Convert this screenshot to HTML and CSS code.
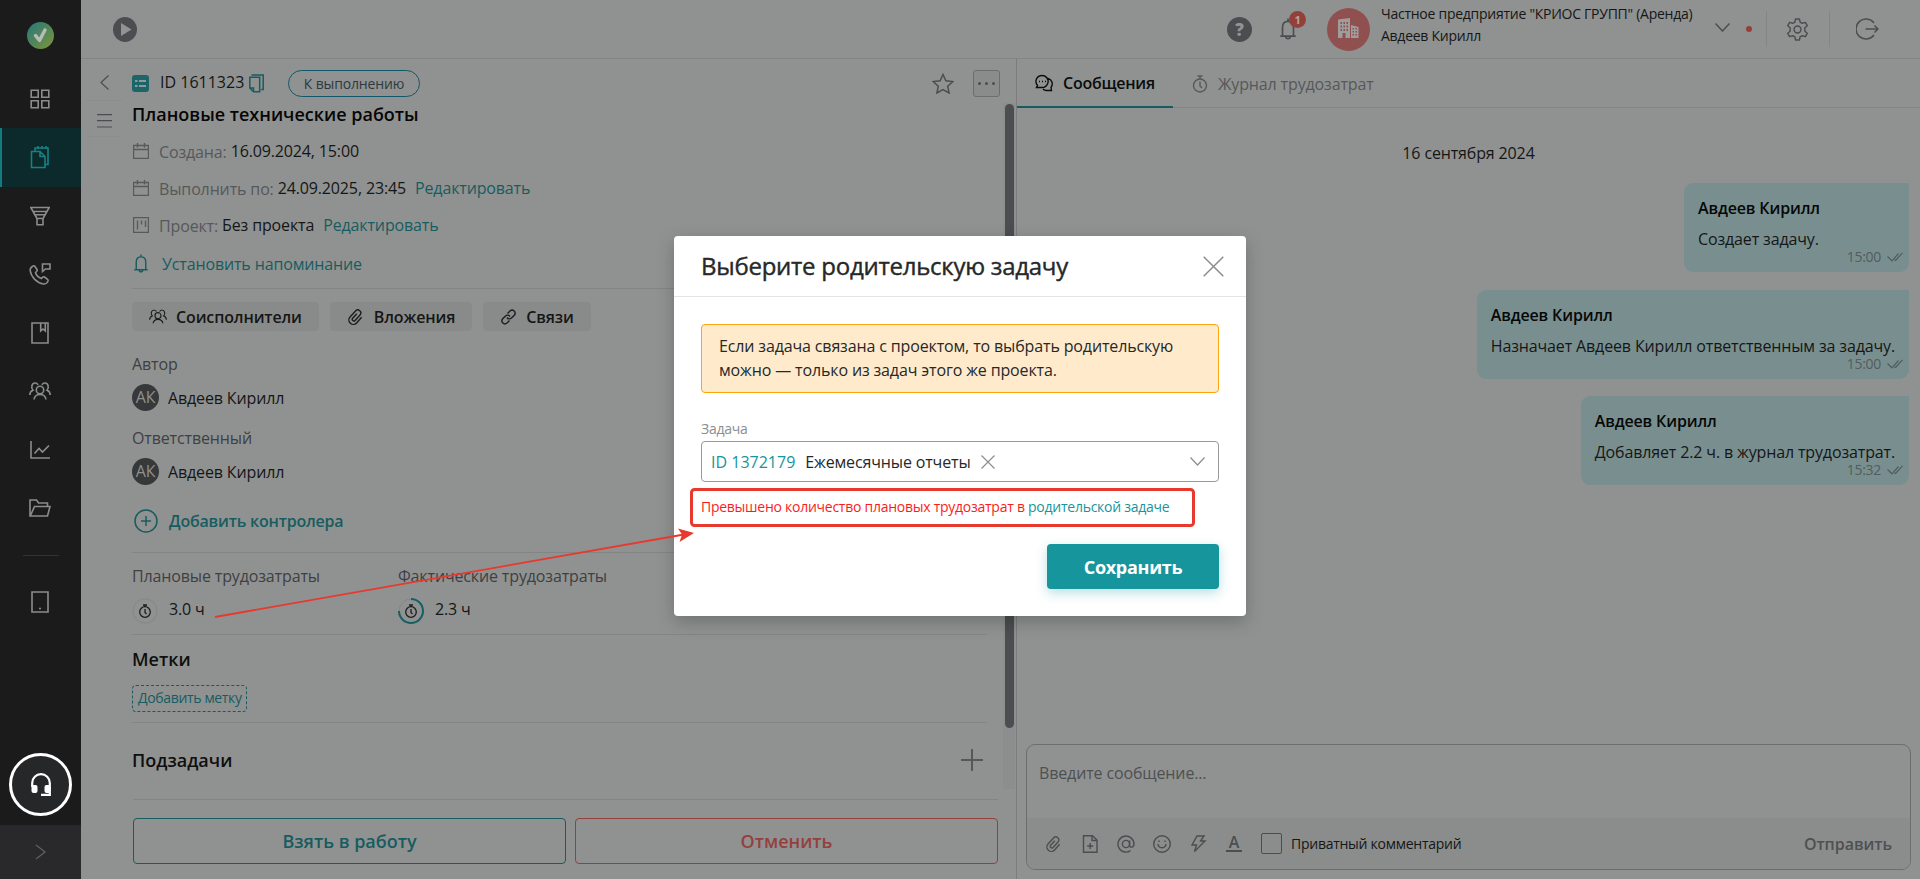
FILE: index.html
```html
<!DOCTYPE html>
<html lang="ru">
<head>
  <meta charset="UTF-8" />
  <title>Плановые технические работы</title>
  <link rel="stylesheet" href="styles.css">
</head>
<body>
  <svg width="0" height="0" class="sprite">
    <symbol id="i-cal" viewBox="0 0 16 16"><path d="M.5 2.500h15v13H.5zM.5 6.500h15M4.500 0v4.500M11.500 0v4.500" /></symbol>
    <symbol id="i-people" viewBox="0 0 22 18">
      <circle cx="11" cy="8" r="3.700" />
      <path d="M5 17.500c.5-3.500 2.500-5 6-5s5.500 1.500 6 5M.8 13c0-2.500 1-4 3.200-4.800C1.500 5.500 3 1 6 1c1.500 0 2.500.7 3 1.800M21.200 13c0-2.500-1-4-3.200-4.800C20.500 5.500 19 1 16 1c-1.500 0-2.500.7-3 1.800" />
    </symbol>
    <symbol id="i-clip" viewBox="0 0 18 18">
      <path transform="rotate(42 9 9)" d="M7.400 6v6.200a1.600 1.600 0 0 0 3.200 0V4.800a3 3 0 0 0-6 0v8.200a4.400 4.400 0 0 0 8.800 0V5.500" />
    </symbol>
    <symbol id="i-watch" viewBox="0 0 16 18"><circle cx="8" cy="10.500" r="6.500" /><path d="M5.500 1h5M8 1v3M8 6.500V11l2 2" /></symbol>
    <symbol id="i-bell" viewBox="0 0 16 20"><path d="M1 16.500h14M3 16V8.500C3 5 5 3 8 3s5 2 5 5.500V16M8 3V.5M6 17c.3 2.500 3.700 2.500 4 0" /></symbol>
    <symbol id="i-ticks" viewBox="0 0 16 10"><path d="M.5 4.500 5 8.800 11.500 1.500M7.500 8.800 9 7.500M8.500 8.500 15.500.800" /></symbol>
  </svg>

  <div class="app">
    <nav class="sidebar">
      <div class="logo">
        <svg width="27" height="27" viewBox="0 0 27 27">
          <defs><linearGradient id="lg" x1="0" y1="0" x2="1" y2="1"><stop offset=".1" stop-color="#2c7a75" /><stop offset=".9" stop-color="#76923f" /></linearGradient></defs>
          <circle cx="13.500" cy="13.500" r="13.500" fill="url(#lg)" />
          <path d="m8.500 13.500 4 5 5.500-10.500" fill="none" stroke="#b9bbba" stroke-width="3.400" stroke-linecap="round" stroke-linejoin="round" />
        </svg>
      </div>
      <a class="nav-item"><svg width="20" height="20" viewBox="0 0 20 20"><path d="M1.200 1.200h7v7h-7zM11.800 1.200h7v7h-7zM1.200 11.800h7v7h-7zM11.800 11.800h7v7h-7z" /></svg></a>
      <a class="nav-item active"><svg width="20" height="24" viewBox="0 0 20 24"><path d="M1.500 6.500h8.500l5 5v11H1.500zM10 6.500v5h5M5 6V3h13v16.500h-3M8 1v3M12 1v3M16 1v3" /></svg></a>
      <a class="nav-item"><svg width="20" height="20" viewBox="0 0 20 20"><path d="M.8 1.500h18.400L13 12.500v6.200H7v-6.200zM3 5.500h14M5.500 8.800h9M7 12.500h6" /></svg></a>
      <a class="nav-item"><svg width="22" height="22" viewBox="0 0 22 22"><path d="M4 3C2.500 3.800 1 5.500 1.200 7.500 2 14 8 20 14.500 21c2 .3 4-1.500 4.500-3 .2-.7 0-1.200-.5-1.700l-3-2.300c-1.500-1-2 .5-3 1.500C9.500 14.500 7 11.500 6.500 9.500c1-1 2.500-1.500 1.500-3L6 3.500C5.500 2.700 4.700 2.600 4 3zM13.500 8.500V1H21v5h-4.500z" /></svg></a>
      <a class="nav-item"><svg width="18" height="22" viewBox="0 0 18 22"><path d="M1 1h16v20H1zM9.700 1v8l2.300-2 2.300 2V1" /></svg></a>
      <a class="nav-item"><svg width="22" height="18"><use href="#i-people" /></svg></a>
      <a class="nav-item"><svg width="20" height="18" viewBox="0 0 20 18"><path d="M1 0v17h19M4.500 12.500 9 7.500l3.500 3.500L19 4.500" /></svg></a>
      <a class="nav-item"><svg width="22" height="18" viewBox="0 0 22 18"><path d="M18.500 7V4H9.500L7.500 1H1v16h17.500L21 7.500H5.500L1.500 16.500" /></svg></a>
      <div class="nav-line"></div>
      <a class="nav-item"><svg width="18" height="22" viewBox="0 0 18 22"><path d="M1 1h16v20H1zM8 17.500h2" /></svg></a>
      <div class="support">
        <svg width="20" height="24" viewBox="0 0 20 24"><path d="M1.200 14V10a8.800 8.800 0 0 1 17.600 0v11.800H10" fill="none" stroke="#fff" stroke-width="2.200" /><rect x=".5" y="12" width="6" height="8" rx="2" fill="#fff" /><rect x="13.500" y="12" width="6" height="8" rx="2" fill="#fff" /></svg>
      </div>
      <div class="nav-toggle"><svg width="12" height="16" viewBox="0 0 12 16"><path d="m1 1 9 7-9 7" fill="none" stroke="#5d5f61" stroke-width="1.300" /></svg></div>
    </nav>

    <div class="main">
      <header class="topbar">
        <svg class="play" width="24" height="25" viewBox="0 0 24 25"><ellipse cx="12" cy="12.500" rx="12" ry="12.500" fill="#4b4d50" /><path d="M8 6v13l10.500-6.500z" fill="#929493" /></svg>
        <div class="help">?</div>
        <div class="notify">
          <svg class="ico" width="18" height="22" viewBox="0 0 16 20"><use href="#i-bell" /></svg>
          <span class="count">1</span>
        </div>
        <div class="company-logo">
          <svg width="21" height="21" viewBox="0 0 21 21"><path fill="#a09c9b" fill-rule="evenodd" d="M0 1.500 12 0v20H7.500v-5h-3v5H0zM2.500 4v2h1.500V4zM5.500 4v2H7V4zM8.500 4v2H10V4zM2.500 7.500v2H4v-2zM5.500 7.500v2H7v-2zM8.500 7.500v2H10v-2zM2.500 11v2H4v-2zM5.500 11v2H7v-2zM8.500 11v2H10v-2zM13 7l7.500 2v11H13zM14.500 10v1.500H16V10zM17.500 10v1.500H19V10zM14.500 13v1.500H16V13zM17.500 13v1.500H19V13zM14.500 16v1.500H16V16zM17.500 16v1.500H19V16z" /></svg>
        </div>
        <div class="account">
          <div>Частное предприятие "КРИОС ГРУПП" (Аренда)</div>
          <div>Авдеев Кирилл</div>
        </div>
        <svg class="ico acc-arrow" width="15" height="9" viewBox="0 0 15 9"><path d="m.5.5 7 7.500 7-7.500" /></svg>
        <span class="dot"></span>
        <div class="top-cell">
          <svg class="ico" width="23" height="23" viewBox="0 0 24 24"><circle cx="12" cy="12" r="3.600" /><path d="M10 1h4l.7 3.200 2.300 1.300 3.200-1 2 3.500-2.500 2.200v3.600l2.500 2.200-2 3.500-3.200-1-2.300 1.300L14 23h-4l-.7-3.200L7 18.500l-3.200 1-2-3.500 2.500-2.200v-3.600L1.800 8l2-3.500 3.200 1 2.300-1.300z" stroke-linejoin="round" /></svg>
        </div>
        <div class="top-cell exit">
          <svg class="ico" width="23" height="22" viewBox="0 0 23 22"><path d="M18 5a10 10 0 1 0 0 12M9.500 11H22M18.500 7.500 22 11l-3.500 3.500" /></svg>
        </div>
      </header>

      <div class="panes">
        <section class="task">
          <div class="task-body">
            <div class="gutter">
              <div class="gutter-btn"><svg class="ico thin" width="9" height="15" viewBox="0 0 9 15"><path d="M8.500.5 1 7.500l7.500 7" /></svg></div>
              <div class="gutter-btn menu"><svg class="ico thin" width="15" height="14" viewBox="0 0 15 14"><path d="M0 .7h15M0 6.700h15M0 13h15" /></svg></div>
            </div>

            <div class="details">
              <div class="task-head">
                <svg width="17" height="17" viewBox="0 0 17 17"><rect width="17" height="17" rx="3" fill="#1c6669" /><path d="M3 6h2.500M3 11h2.500M7 6h7M7 11h7" stroke="#8f9b9b" stroke-width="2.200" /></svg>
                <span class="task-id">ID 1611323</span>
                <svg class="ico teal" width="15" height="19" viewBox="0 0 15 19"><path d="M.8 3.200h9.900v14.500H4.500L.8 14zM4.500 17.500V14H.8M2.500 1h11.700v14.500h-2" /></svg>
                <span class="status">К выполнению</span>
                <svg class="ico star" width="22" height="21" viewBox="0 0 22 21"><path d="m11 1.500 2.900 6.300 6.900.8-5.100 4.600 1.400 6.800-6.100-3.400L4.900 20l1.400-6.800L1.200 8.600l6.900-.8z" /></svg>
                <span class="more"><i></i><i></i><i></i></span>
              </div>

              <h1>Плановые технические работы</h1>

              <div class="meta"><svg class="ico grey"><use href="#i-cal" /></svg><span class="key">Создана:</span><span>16.09.2024, 15:00</span></div>
              <div class="meta"><svg class="ico grey"><use href="#i-cal" /></svg><span class="key">Выполнить по:</span><span>24.09.2025, 23:45</span><a>Редактировать</a></div>
              <div class="meta"><svg class="ico grey" viewBox="0 0 16 16"><path d="M.5.500h15v15H.5zM4.500 3.500v9M8.500 3.500v4M12.500 3.500v6.500" /></svg><span class="key">Проект:</span><span>Без проекта</span><a>Редактировать</a></div>
              <div class="meta remind"><svg class="ico teal" viewBox="0 0 16 20"><use href="#i-bell" /></svg><a>Установить напоминание</a></div>

              <div class="chips">
                <span class="chip"><svg class="ico dark" width="18" height="15" viewBox="0 0 22 18"><use href="#i-people" /></svg>Соисполнители</span>
                <span class="chip"><svg class="ico dark" width="18" height="18"><use href="#i-clip" /></svg>Вложения</span>
                <span class="chip"><svg class="ico dark" width="17" height="16" viewBox="0 0 16 16"><path d="M7 4.500 9.500 2c3-2.500 6.500 1 4.500 4l-3 3c-1.700 1.500-3.500 1-4.500-.5M9 11.500 6.500 14c-3 2.500-6.500-1-4.500-4l3-3c1.700-1.500 3.500-1 4.500.5" /></svg>Связи</span>
              </div>

              <div class="label author">Автор</div>
              <div class="person"><span class="avatar">АК</span>Авдеев Кирилл</div>
              <div class="label resp">Ответственный</div>
              <div class="person"><span class="avatar">АК</span>Авдеев Кирилл</div>
              <a class="add-controller"><svg class="ico teal" width="24" height="24" viewBox="0 0 24 24"><circle cx="12" cy="12" r="11" /><path d="M12 7v10M7 12h10" /></svg>Добавить контролера</a>

              <div class="effort">
                <div class="effort-col">
                  <div class="label">Плановые трудозатраты</div>
                  <div class="value">
                    <svg width="26" height="26" viewBox="0 0 26 26"><circle cx="13" cy="13" r="12" fill="none" stroke="#888a89" stroke-width="1.500" /><g class="watch"><circle cx="13" cy="14" r="5.300" /><path d="M11 7h4M13 7v2M13 11v3.500l1.500 1.500" /></g></svg>
                    3.0 ч
                  </div>
                </div>
                <div class="effort-col">
                  <div class="label">Фактические трудозатраты</div>
                  <div class="value">
                    <svg width="26" height="26" viewBox="0 0 26 26"><circle cx="13" cy="13" r="12" fill="none" stroke="#858786" /><path d="M13 1A12 12 0 1 1 1 13" fill="none" stroke="#156064" stroke-width="2" /><g class="watch"><circle cx="13" cy="14" r="5.300" /><path d="M11 7h4M13 7v2M13 11v3.500l1.500 1.500" /></g></svg>
                    2.3 ч
                  </div>
                </div>
              </div>

              <div class="tags">
                <h2>Метки</h2>
                <a class="tag-add">Добавить метку</a>
              </div>

              <div class="subtasks">
                <h2>Подзадачи</h2>
                <svg width="22" height="22" viewBox="0 0 22 22"><path d="M11 0v22M0 11h22" stroke="#555759" stroke-width="2" /></svg>
              </div>
            </div>

            <div class="scrollbar"><div class="thumb"></div></div>
          </div>

          <div class="actions">
            <button class="btn take">Взять в работу</button>
            <button class="btn cancel">Отменить</button>
          </div>
        </section>

        <section class="chat">
          <div class="tabs">
            <div class="tab current"><svg width="18" height="18" viewBox="0 0 18 18"><path d="M2.500 11.500C-1 7 2 1.500 7 1.500c4.500 0 7.500 4.500 5.500 8.500-1 2.200-3 3.500-5.500 3.500H1.500zM13 4.500c4 1 5.500 5.500 3 9l.5 3h-5c-1.500 0-2.700-.6-3.500-1.500M4 7.500h1M7 7.500h1M10 7.500h1" /></svg>Сообщения</div>
            <div class="tab"><svg width="16" height="18"><use href="#i-watch" /></svg>Журнал трудозатрат</div>
          </div>

          <div class="messages">
            <div class="date">16 сентября 2024</div>
            <div class="msg first">
              <b>Авдеев Кирилл</b>
              <p>Создает задачу.</p>
              <span class="time">15:00<svg width="16" height="10"><use href="#i-ticks" /></svg></span>
            </div>
            <div class="msg">
              <b>Авдеев Кирилл</b>
              <p>Назначает Авдеев Кирилл ответственным за задачу.</p>
              <span class="time">15:00<svg width="16" height="10"><use href="#i-ticks" /></svg></span>
            </div>
            <div class="msg">
              <b>Авдеев Кирилл</b>
              <p>Добавляет 2.2 ч. в журнал трудозатрат.</p>
              <span class="time">15:32<svg width="16" height="10"><use href="#i-ticks" /></svg></span>
            </div>
          </div>

          <div class="composer">
            <div class="placeholder">Введите сообщение...</div>
            <div class="tools">
              <svg><use href="#i-clip" /></svg>
              <svg viewBox="0 0 18 18"><path d="M2.500.7h9L16 5v12.300H2.500zM11 .7V5.500h5M9.200 8v6M6.200 11h6" /></svg>
              <svg viewBox="0 0 18 18"><circle cx="9" cy="9" r="3.600" /><path d="M12.600 5.500v5c0 3 4.400 2 4.400-1.500a8 8 0 1 0-3.500 6.700" /></svg>
              <svg viewBox="0 0 18 18"><circle cx="9" cy="9" r="8.300" /><path d="M5 9c.5 5 7.500 5 8 0M6 5.500v1.500M12 5.500v1.500" /></svg>
              <svg viewBox="0 0 18 18"><path d="M8 1h7l-3.500 5H16L5.500 16.500l2-6.500H3z" /></svg>
              <span class="letter">A</span>
              <span class="check"></span>
              <span class="private">Приватный комментарий</span>
              <span class="send">Отправить</span>
            </div>
          </div>
        </section>
      </div>
    </div>
  </div>

  <div class="modal">
    <div class="modal-head">
      <span>Выберите родительскую задачу</span>
      <svg width="21" height="21" viewBox="0 0 21 21"><path d="m.7.700 19.600 19.600M20.300.7.700 20.300" stroke="#8b8d90" stroke-width="1.500" /></svg>
    </div>
    <div class="modal-body">
      <div class="alert">Если задача связана с проектом, то выбрать родительскую можно — только из задач этого же проекта.</div>
      <label>Задача</label>
      <div class="select">
        <a>ID 1372179</a>
        <span>Ежемесячные отчеты</span>
        <svg width="14" height="14" viewBox="0 0 14 14"><path d="m.5.500 13 13M13.500.5l-13 13" /></svg>
        <svg class="arrow" width="15" height="9" viewBox="0 0 15 9"><path d="m.5.5 7 7.500 7-7.500" /></svg>
      </div>
      <div class="error">Превышено количество плановых трудозатрат в <a>родительской задаче</a></div>
      <button class="save">Сохранить</button>
    </div>
  </div>

  <!-- пометки поверх окна -->
  <svg class="marks" width="1920" height="879" viewBox="0 0 1920 879">
    <rect x="691.500" y="489.500" width="502" height="36" rx="3" fill="none" stroke="#e8392e" stroke-width="3" />
    <path d="M215 617 684 534.500" stroke="#e8392e" stroke-width="1.800" />
    <path d="m694 533-16-4.500 4 6-2.500 7.500z" fill="#e8392e" />
  </svg>
</body>
</html>
```

FILE: styles.css
```css
* {
  box-sizing: border-box;
}

body {
  margin: 0;
  font: 16px/24px "Open Sans", "Noto Sans", sans-serif;
  letter-spacing: -0.14px;
  background: #909291;
  color: #151616;
  overflow: hidden;
}

h1, h2, p {
  margin: 0;
}

a {
  color: #175c60;
}

svg {
  flex: none;
  display: block;
}

.sprite {
  position: absolute;
}

.ico {
  fill: none;
  stroke: #4b4d50;
  stroke-width: 1.5;
}

.ico.thin { stroke-width: 1.2; }
.ico.grey { stroke: #57595b; stroke-width: 1.4; }
.ico.teal { stroke: #175c60; }
.ico.dark { stroke: #1c1d1d; stroke-width: 1.4; }

.app {
  display: flex;
  height: 879px;
}

/* боковое меню */
.sidebar {
  width: 81px;
  flex: none;
  display: flex;
  flex-direction: column;
  align-items: center;
  background: #1a1b1a;
}

.logo {
  height: 69.5px;
  padding-top: 22px;
}

.nav-item {
  width: 81px;
  height: 58.5px;
  flex: none;
  display: flex;
  align-items: center;
  justify-content: center;
  padding-right: 1px;
}

.nav-item svg {
  fill: none;
  stroke: #8b8d8c;
  stroke-width: 1.6;
}

.nav-item.active {
  background: #0c2a2b;
  border-left: 2px solid #167b80;
  padding-right: 3px;
}

.nav-item.active svg {
  stroke: #178085;
}

.nav-line {
  width: 36px;
  height: 1px;
  margin: 17px 0;
  background: #323333;
}

.support {
  width: 63px;
  height: 63px;
  margin-top: auto;
  border: 3px solid #fff;
  border-radius: 50%;
  background: #262729;
  display: flex;
  align-items: center;
  justify-content: center;
}

.nav-toggle {
  width: 81px;
  height: 54px;
  margin-top: 9px;
  background: #29292b;
  display: flex;
  align-items: center;
  justify-content: center;
}

.main {
  width: 1839px;
}

/* верхняя панель */
.topbar {
  height: 59px;
  display: flex;
  align-items: center;
  border-bottom: 1px solid #838584;
}

.play {
  margin-left: 32px;
}

.help {
  width: 25px;
  height: 25px;
  margin-left: auto;
  border-radius: 50%;
  background: #4b4d50;
  color: #929493;
  font-weight: 800;
  font-size: 17px;
  line-height: 25px;
  text-align: center;
}

.notify {
  position: relative;
  margin-left: 27px;
}

.count {
  position: absolute;
  left: 10px;
  top: -7px;
  width: 17px;
  height: 17px;
  border-radius: 50%;
  background: #94403a;
  color: #b5a3a0;
  font-size: 11px;
  font-weight: 700;
  line-height: 17px;
  text-align: center;
}

.company-logo {
  width: 43px;
  height: 43px;
  margin-left: 30px;
  padding: 10px 11px;
  border-radius: 50%;
  background: #90504f;
}

.account {
  width: 334px;
  margin-left: 11px;
  margin-top: -8px;
  font-size: 14px;
  line-height: 22px;
  letter-spacing: -0.26px;
}

.dot {
  width: 6px;
  height: 6px;
  margin-left: 16px;
  border-radius: 50%;
  background: #94403a;
}

.top-cell {
  height: 36px;
  width: 63px;
  padding-right: 2px;
  display: flex;
  align-items: center;
  justify-content: center;
  border-left: 1px solid #838584;
  margin-left: 14px;
}

.top-cell.exit {
  width: 91px;
  margin-left: 0;
  padding-right: 15px;
}

.acc-arrow {
  margin-top: -4px;
}

/* задача */
.panes {
  display: flex;
  height: 820px;
}

.task {
  width: 936px;
  border-right: 1px solid #7b7d7c;
}

.task-body {
  display: flex;
  height: 740px;
}

.gutter {
  width: 51px;
  padding: 6px 9px 0 4px;
}

.gutter-btn {
  height: 36px;
  display: flex;
  align-items: center;
  justify-content: center;
  border-bottom: 1px solid #8c8e8d;
  border-radius: 3px;
}

.gutter-btn.menu {
  padding-top: 4px;
}

.details {
  width: 868px;
  padding-right: 13px;
}

.task-head {
  width: 868px;
  height: 44px;
  padding-top: 5px;
  display: flex;
  align-items: center;
}

.task-id {
  width: 89px;
  margin-left: 11px;
  margin-top: -3px;
  letter-spacing: 0;
}

.status {
  width: 132px;
  height: 27px;
  margin-left: 24px;
  border: 1px solid #11576a;
  border-radius: 14px;
  font-size: 14px;
  line-height: 25px;
  letter-spacing: -0.15px;
  text-align: center;
  color: #2b3a40;
}

.star {
  margin: 0 1px 0 auto;
}

.more {
  width: 27px;
  height: 27px;
  margin-left: 18px;
  display: flex;
  align-items: center;
  justify-content: center;
  gap: 4px;
  border: 1px solid #6c6e6d;
  border-radius: 3px;
  background: #8a8c8b;
}

.more i {
  width: 3px;
  height: 3px;
  border-radius: 50%;
  background: #4b4d50;
}

h1 {
  font-size: 18px;
  font-weight: 600;
  line-height: 22px;
  margin-bottom: 7px;
  letter-spacing: 0;
  color: #060606;
}

h2 {
  font-size: 18px;
  font-weight: 600;
  line-height: 24px;
  letter-spacing: 0;
  color: #0e0f0f;
}

.meta {
  height: 37px;
  display: flex;
  align-items: center;
  white-space: nowrap;
}

.meta svg {
  width: 16px;
  height: 16px;
  margin: 0 10px 0 1px;
}

.key {
  margin-right: 4px;
  padding-top: 2px;
  color: #56585a;
}

.meta span + a {
  margin-left: 9px;
}

.meta.remind {
  height: 46px;
  padding-bottom: 4px;
  border-bottom: 1px solid #838584;
}

.meta.remind svg {
  height: 19px;
  margin-right: 13px;
}

.chips {
  display: flex;
  gap: 11px;
  padding-top: 13px;
}

.chip {
  height: 29px;
  padding: 0 17px;
  display: flex;
  align-items: center;
  gap: 9px;
  border-radius: 4px;
  background: #898b8a;
  font-weight: 600;
  letter-spacing: -0.14px;
}

.label {
  color: #3e4042;
}

.label.author { margin-top: 21px; }
.label.resp { margin-top: 15px; }

.person {
  height: 27px;
  margin-top: 8px;
  display: flex;
  align-items: center;
  gap: 9px;
}

.avatar {
  width: 27px;
  height: 27px;
  border-radius: 50%;
  background: #36383a;
  color: #8f9190;
  line-height: 27px;
  text-align: center;
}

.add-controller {
  display: flex;
  align-items: center;
  gap: 11px;
  height: 24px;
  margin: 24px 0 19px 2px;
  font-weight: 600;
  letter-spacing: -0.2px;
}

.effort {
  display: flex;
  height: 83px;
  padding-top: 11px;
  border-top: 1px solid #838584;
  border-bottom: 1px solid #838584;
}

.effort-col {
  width: 266px;
}

.value {
  height: 26px;
  margin-top: 10px;
  display: flex;
  gap: 11px;
  line-height: 23px;
}

.watch {
  fill: none;
  stroke: #1c1d1d;
  stroke-width: 1.3;
}

.tags {
  height: 88px;
  padding-top: 12px;
  border-bottom: 1px solid #838584;
}

.tag-add {
  display: inline-block;
  height: 27px;
  margin-top: 14px;
  padding: 0 4px 0 5px;
  border: 1px dashed #175c60;
  border-radius: 4px;
  font-size: 14px;
  line-height: 24px;
  letter-spacing: -0.35px;
}

.subtasks {
  display: flex;
  justify-content: space-between;
  align-items: center;
  padding: 25px 4px 0 0;
}

.scrollbar {
  width: 12px;
  height: 686px;
  margin: 44px 0 0 3px;
  padding: 1px 1px 0 2px;
  background: #8c8e8d;
}

.thumb {
  height: 624px;
  border-radius: 5px;
  background: #4b4d50;
}

.actions {
  display: flex;
  gap: 9px;
  height: 80px;
  margin: 0 18px 0 52px;
  padding-top: 18px;
  border-top: 1px solid #838584;
}

.btn {
  width: 433px;
  height: 46px;
  background: none;
  border: 1px solid #175c60;
  border-radius: 4px;
  color: #175c60;
  font: 600 18px "Open Sans", sans-serif;
  letter-spacing: 0;
}

.btn.cancel {
  width: 423px;
  border-color: #94403f;
  color: #94403f;
}

/* чат */
.chat {
  width: 903px;
  display: flex;
  flex-direction: column;
}

.tabs {
  display: flex;
  height: 49px;
  border-bottom: 1px solid #838584;
}

.tab {
  height: 49px;
  padding-left: 19px;
  display: flex;
  align-items: center;
  gap: 10px;
  color: #56585a;
}

.tab.current {
  width: 156px;
  padding-left: 18px;
  border-bottom: 2px solid #175c60;
  color: #0b0c0c;
  font-weight: 600;
  letter-spacing: -0.25px;
}

.tab svg {
  fill: none;
  stroke: currentColor;
  stroke-width: 1.4;
}

.messages {
  flex: 1;
  display: flex;
  flex-direction: column;
  align-items: flex-end;
  padding-right: 11px;
}

.date {
  width: 881px;
  margin: 33px 0 18px;
  text-align: center;
}

.msg {
  height: 89px;
  margin-bottom: 17.5px;
  padding: 13px 14px 0;
  border-radius: 9px 0 9px 9px;
  background: #798f8f;
}

.msg.first {
  width: 225px;
}

.msg b {
  display: block;
  font-weight: 600;
  color: #060707;
}

.msg p {
  margin-top: 9px;
  line-height: 20px;
}

.time {
  display: flex;
  align-items: center;
  justify-content: flex-end;
  gap: 6px;
  margin: 0 -8px 0 0;
  font-size: 14px;
  line-height: 16px;
  letter-spacing: -0.3px;
  color: #535c5d;
}

.time svg {
  fill: none;
  stroke: #535c5d;
  stroke-width: 1.2;
}

.composer {
  width: 885px;
  height: 126px;
  margin: 0 0 9px 9px;
  border: 1px solid #6c6e6d;
  border-radius: 9px;
  overflow: hidden;
}

.placeholder {
  height: 73px;
  padding: 16px 12px;
  color: #4e5052;
}

.tools {
  height: 51px;
  display: flex;
  align-items: center;
  padding: 0 18px;
  background: #8b8d8c;
}

.tools svg {
  width: 18px;
  height: 18px;
  margin-right: 18px;
  fill: none;
  stroke: #4b4d50;
  stroke-width: 1.4;
}

.letter {
  width: 16px;
  height: 17px;
  margin: 0 19px 0 1px;
  border-bottom: 2px solid #4b4d50;
  color: #4b4d50;
  font-weight: 600;
  line-height: 14px;
  text-align: center;
}

.check {
  width: 21px;
  height: 21px;
  border: 1px solid #4b4d50;
  border-radius: 2px;
}

.private {
  margin-left: 9px;
  font-size: 14px;
  letter-spacing: -0.26px;
}

.send {
  margin-left: auto;
  color: #4e5052;
  font-weight: 600;
  letter-spacing: -0.05px;
}

/* окно выбора задачи */
.modal {
  position: absolute;
  left: 674px;
  top: 236px;
  width: 572px;
  height: 380px;
  border-radius: 4px;
  background: #fff;
  color: #262829;
  box-shadow: 0 6px 18px rgba(0, 0, 0, 0.22);
}

.modal-head {
  height: 61px;
  padding: 0 22px 0 27px;
  display: flex;
  align-items: center;
  justify-content: space-between;
  border-bottom: 1px solid #e3e5e5;
  font-size: 24px;
  letter-spacing: -0.26px;
}

.modal-head span {
  -webkit-text-stroke: 0.4px #262829;
}

.modal-body {
  padding: 27px;
  display: flex;
  flex-direction: column;
}

.modal-body a {
  color: #17959c;
}

.alert {
  height: 69px;
  padding: 9px 17px;
  border: 1px solid #f9a70d;
  border-radius: 4px;
  background: #ffebcc;
}

.modal label {
  margin-top: 24px;
  font-size: 14px;
  letter-spacing: -0.26px;
  color: #8b8d90;
}

.select {
  height: 41px;
  padding: 0 13px 0 9px;
  display: flex;
  align-items: center;
  border: 1px solid #98999b;
  border-radius: 4px;
}

.select a {
  letter-spacing: 0;
}

.select span {
  margin: 0 10px;
}

.select svg {
  fill: none;
  stroke: #8b8d90;
  stroke-width: 1.2;
}

.select .arrow {
  margin-left: auto;
}

.error {
  margin-top: 13px;
  font-size: 14px;
  letter-spacing: -0.26px;
  color: #fb1d1d;
}

.save {
  align-self: flex-end;
  width: 172px;
  height: 45px;
  margin-top: 25px;
  border: 0;
  border-radius: 4px;
  background: #17959c;
  color: #fff;
  font: 700 18px "Open Sans", sans-serif;
  letter-spacing: -0.3px;
  box-shadow: 0 4px 12px rgba(23, 149, 156, 0.3);
}

.marks {
  position: absolute;
  left: 0;
  top: 0;
}
```
